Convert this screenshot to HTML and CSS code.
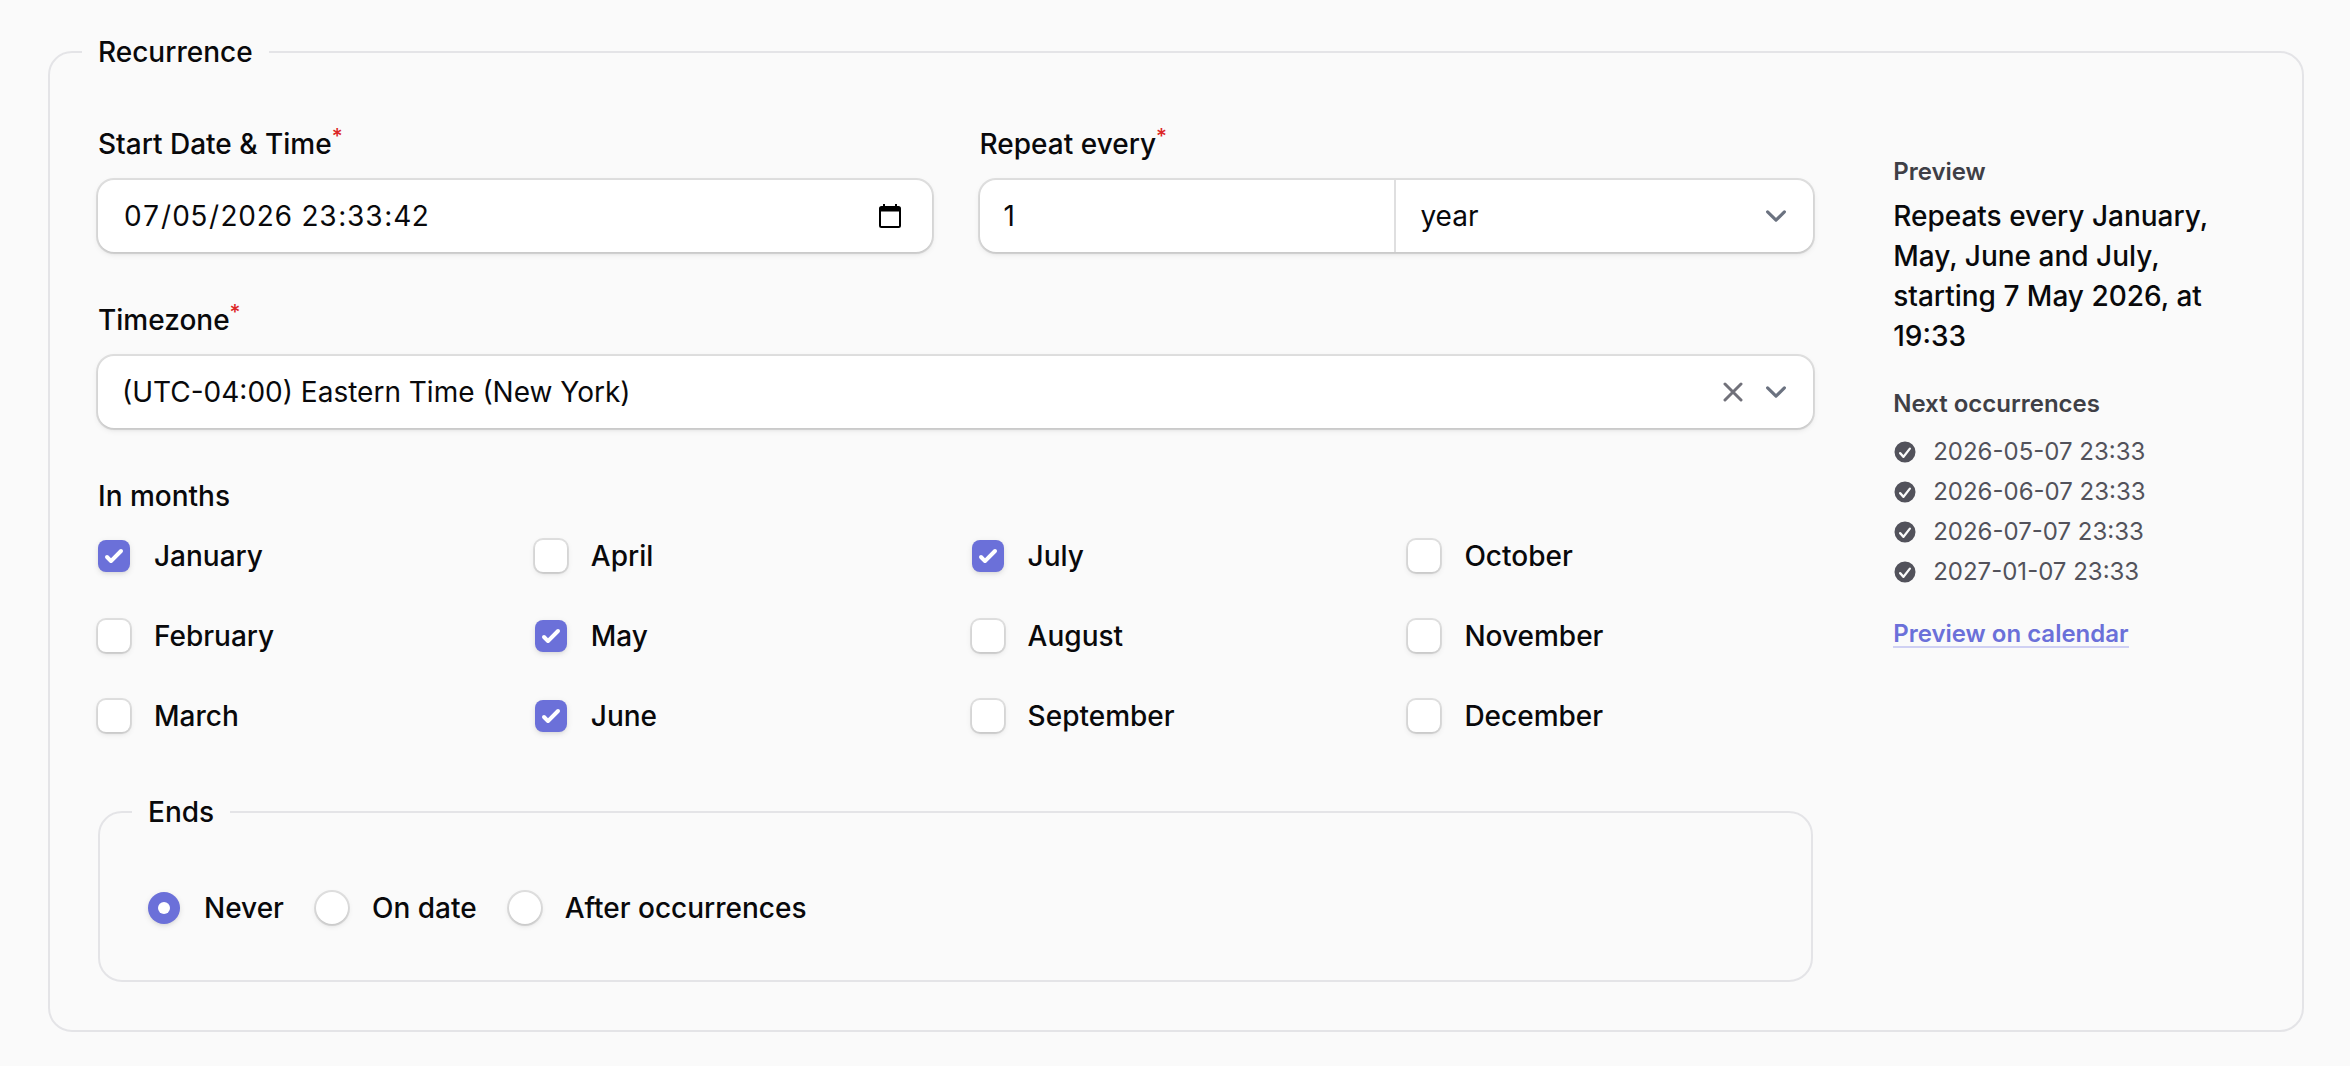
FILE: index.html
```html
<!DOCTYPE html>
<html lang="en">
<head>
<meta charset="utf-8">
<meta name="viewport" content="width=device-width, initial-scale=1">
<title>Recurrence</title>
<link rel="stylesheet" href="styles.css">
</head>
<body>
<form class="page">
  <fieldset class="fieldset">
    <legend class="legend">Recurrence</legend>
    <div class="layout">
      <div class="fields">
        <div class="field">
          <label class="label" for="start">Start Date &amp; Time<sup class="required">*</sup></label>
          <div class="control">
            <div class="segments">
              <input class="segment" id="start" type="text" inputmode="numeric" value="07" aria-label="Day" required>
              <span>/</span>
              <input class="segment" type="text" inputmode="numeric" value="05" aria-label="Month" required>
              <span>/</span>
              <input class="segment year" type="text" inputmode="numeric" value="2026" aria-label="Year" required>
              <input class="segment" type="text" inputmode="numeric" value="23" aria-label="Hours" required>
              <span>:</span>
              <input class="segment" type="text" inputmode="numeric" value="33" aria-label="Minutes" required>
              <span>:</span>
              <input class="segment" type="text" inputmode="numeric" value="42" aria-label="Seconds" required>
            </div>
            <button class="picker" type="button" aria-label="Open calendar">
              <svg class="picker-icon" viewBox="0 0 24 24" aria-hidden="true"><path fill="currentColor" fill-rule="evenodd" d="M5 0h2v2h10V0h2v2h1.500a2.500 2.500 0 0 1 2.500 2.500v17a2.500 2.500 0 0 1-2.500 2.500h-17A2.500 2.500 0 0 1 1 21.500v-17A2.500 2.500 0 0 1 3.500 2H5zM3 7.500V22h18V7.500z"/></svg>
            </button>
          </div>
        </div>
        <div class="field">
          <label class="label" for="every">Repeat every<sup class="required">*</sup></label>
          <div class="control split">
            <input class="input" id="every" type="text" inputmode="numeric" value="1" required>
            <span class="unit">
              <select class="input select" aria-label="Repeat unit">
                <option>day</option><option>week</option><option>month</option><option selected>year</option>
              </select>
            </span>
          </div>
        </div>
        <div class="field wide">
          <label class="label" for="timezone">Timezone<sup class="required">*</sup></label>
          <div class="control">
            <select class="input select" id="timezone" required>
              <option>(UTC-04:00) Eastern Time (New York)</option>
            </select>
            <button class="clear" type="button" aria-label="Clear timezone">
              <svg class="clear-icon" viewBox="0 0 20 20" fill="none" stroke="currentColor" stroke-width="3" stroke-linecap="round" aria-hidden="true"><path d="M2 2l16 16M18 2L2 18"/></svg>
            </button>
          </div>
        </div>
        <div class="field wide" role="group" aria-labelledby="months-label">
          <span class="label" id="months-label">In months</span>
          <div class="months">
            <label class="choice"><input class="check" type="checkbox" checked>January</label>
            <label class="choice"><input class="check" type="checkbox">February</label>
            <label class="choice"><input class="check" type="checkbox">March</label>
            <label class="choice"><input class="check" type="checkbox">April</label>
            <label class="choice"><input class="check" type="checkbox" checked>May</label>
            <label class="choice"><input class="check" type="checkbox" checked>June</label>
            <label class="choice"><input class="check" type="checkbox" checked>July</label>
            <label class="choice"><input class="check" type="checkbox">August</label>
            <label class="choice"><input class="check" type="checkbox">September</label>
            <label class="choice"><input class="check" type="checkbox">October</label>
            <label class="choice"><input class="check" type="checkbox">November</label>
            <label class="choice"><input class="check" type="checkbox">December</label>
          </div>
        </div>
        <fieldset class="fieldset wide">
          <legend class="legend">Ends</legend>
          <div class="ends">
            <label class="choice"><input class="check radio" type="radio" name="ends" checked>Never</label>
            <label class="choice"><input class="check radio" type="radio" name="ends">On date</label>
            <label class="choice"><input class="check radio" type="radio" name="ends">After occurrences</label>
          </div>
        </fieldset>
      </div>
      <aside class="preview">
        <h2 class="heading">Preview</h2>
        <p class="summary">Repeats every January, May, June and July, starting 7 May 2026, at 19:33</p>
        <h2 class="heading">Next occurrences</h2>
        <ul class="dates">
          <li class="date"><svg class="tick" viewBox="0 0 16 16" aria-hidden="true"><use href="#check-circle"/></svg>2026-05-07 23:33</li>
          <li class="date"><svg class="tick" viewBox="0 0 16 16" aria-hidden="true"><use href="#check-circle"/></svg>2026-06-07 23:33</li>
          <li class="date"><svg class="tick" viewBox="0 0 16 16" aria-hidden="true"><use href="#check-circle"/></svg>2026-07-07 23:33</li>
          <li class="date"><svg class="tick" viewBox="0 0 16 16" aria-hidden="true"><use href="#check-circle"/></svg>2027-01-07 23:33</li>
        </ul>
        <a class="link" href="#calendar">Preview on calendar</a>
      </aside>
    </div>
  </fieldset>
</form>
<svg width="0" height="0" class="sprite" aria-hidden="true">
  <symbol id="check-circle" viewBox="0 0 16 16"><path fill="currentColor" fill-rule="evenodd" d="M8 15A7 7 0 1 0 8 1a7 7 0 0 0 0 14Zm3.844-8.791a.75.75 0 0 0-1.188-.918l-3.7 4.79-1.649-1.833a.75.75 0 1 0-1.114 1.004l2.25 2.5a.75.75 0 0 0 1.15-.043l4.25-5.5Z"/></symbol>
</svg>
</body>
</html>
```
FILE: styles.css
```css
:root {
  --primary: #6b70d9;
  --ring: 0 0 0 2px rgba(9, 9, 11, 0.1);
  --shadow: 0 2px 6px rgba(0, 0, 0, 0.1), 0 2px 4px -2px rgba(0, 0, 0, 0.1);
}

* {
  box-sizing: border-box;
}

body {
  margin: 0;
  background: #fafafa;
  color: #09090b;
  font: 500 28px/40px Inter, "Noto Sans", sans-serif;
}

.page {
  padding: 28px 46px 34px 48px;
}

.fieldset {
  min-width: 0;
  margin: 0;
  padding: 48px;
  border: 2px solid #e4e4e7;
  border-radius: 24px;
}

.legend {
  margin-left: -16px;
  padding: 0 16px;
  line-height: 48px;
}

.layout {
  display: grid;
  grid-template-columns: repeat(5, minmax(0, 1fr));
  gap: 48px;
}

.fields {
  grid-column: span 4;
  display: grid;
  grid-template-columns: repeat(2, minmax(0, 1fr));
  gap: 48px;
}

.wide {
  grid-column: 1 / -1;
}

.field {
  display: flex;
  flex-direction: column;
  gap: 16px;
}

.label {
  height: 40px;
}

.required {
  color: #dc2626;
  font-size: 21px;
  line-height: 0;
}

.control {
  position: relative;
  display: flex;
  height: 72px;
  border-radius: 16px;
  background: #fff;
  box-shadow: var(--ring), var(--shadow);
}

.split {
  display: grid;
  grid-template-columns: repeat(2, minmax(0, 1fr));
}

.input,
.segment {
  border: 0;
  outline: 0;
  background-color: transparent;
  color: inherit;
  font: inherit;
  font-weight: 400;
}

.input {
  flex: 1 1 0;
  min-width: 0;
  padding: 0 24px;
  border-radius: 16px;
}

.segments {
  flex: 1;
  display: flex;
  align-items: center;
  padding-left: 25px;
  font-weight: 400;
}

.segment {
  width: 38px;
  padding: 0;
  font-variant-numeric: tabular-nums;
  text-align: center;
}

.year {
  width: 74px;
  margin-right: 7px;
}

.select {
  appearance: none;
  padding-right: 120px;
  background: url("data:image/svg+xml,%3Csvg xmlns='http://www.w3.org/2000/svg' fill='none' viewBox='0 0 20 20'%3E%3Cpath stroke='%236b7280' stroke-linecap='round' stroke-linejoin='round' stroke-width='1.5' d='m6 8 4 4 4-4'/%3E%3C/svg%3E") right 16px center / 42px no-repeat;
}

.unit {
  display: flex;
  box-shadow: -2px 0 #dfdfe0;
}

.picker,
.clear {
  display: flex;
  align-items: center;
  justify-content: center;
  padding: 0;
  border: 0;
  background: none;
}

.picker {
  width: 84px;
  color: #000;
}

.picker-icon {
  width: 24px;
  height: 24px;
}

.clear {
  position: absolute;
  top: 0;
  right: 60px;
  width: 40px;
  height: 72px;
  color: #71717a;
}

.clear-icon {
  width: 20px;
  height: 20px;
}

.months {
  display: grid;
  grid-template-rows: repeat(3, 48px);
  grid-template-columns: repeat(4, minmax(0, 1fr));
  grid-auto-flow: column;
  gap: 32px;
}

.ends {
  display: flex;
  flex-wrap: wrap;
  gap: 32px;
}

.choice {
  display: flex;
  align-items: center;
  gap: 24px;
  line-height: 48px;
}

.check {
  appearance: none;
  flex: none;
  width: 32px;
  height: 32px;
  margin: 0;
  border-radius: 8px;
  background: #fff center / 100% no-repeat;
  box-shadow: var(--ring), var(--shadow);
}

.check:checked {
  background-color: var(--primary);
  background-image: url("data:image/svg+xml,%3Csvg viewBox='0 0 16 16' fill='white' xmlns='http://www.w3.org/2000/svg'%3E%3Cpath d='M12.207 4.793a1 1 0 0 1 0 1.414l-5 5a1 1 0 0 1-1.414 0l-2-2a1 1 0 0 1 1.414-1.414L6.500 9.086l4.293-4.293a1 1 0 0 1 1.414 0z'/%3E%3C/svg%3E");
  box-shadow: var(--shadow);
}

.radio {
  border-radius: 50%;
}

.radio:checked {
  background-image: url("data:image/svg+xml,%3Csvg viewBox='0 0 16 16' fill='white' xmlns='http://www.w3.org/2000/svg'%3E%3Ccircle cx='8' cy='8' r='3'/%3E%3C/svg%3E");
}

.preview {
  padding: 32px;
  font-size: 24px;
  line-height: 32px;
}

.heading {
  margin: 0;
  color: #3f3f46;
  font-size: 24px;
  font-weight: 600;
}

.summary {
  margin: 8px 0 32px;
  font-size: 28px;
  line-height: 40px;
}

.dates {
  display: flex;
  flex-direction: column;
  gap: 8px;
  margin: 16px 0 34px;
  padding: 0;
  color: #52525b;
  font-weight: 400;
  list-style: none;
}

.date {
  display: flex;
  align-items: center;
  gap: 16px;
}

.tick {
  width: 24px;
  height: 24px;
}

.link {
  display: block;
  width: fit-content;
  border-bottom: 2px solid #cfd0f3;
  color: var(--primary);
  font-weight: 600;
  line-height: 24px;
  text-decoration: none;
}

.sprite {
  position: absolute;
}
```
